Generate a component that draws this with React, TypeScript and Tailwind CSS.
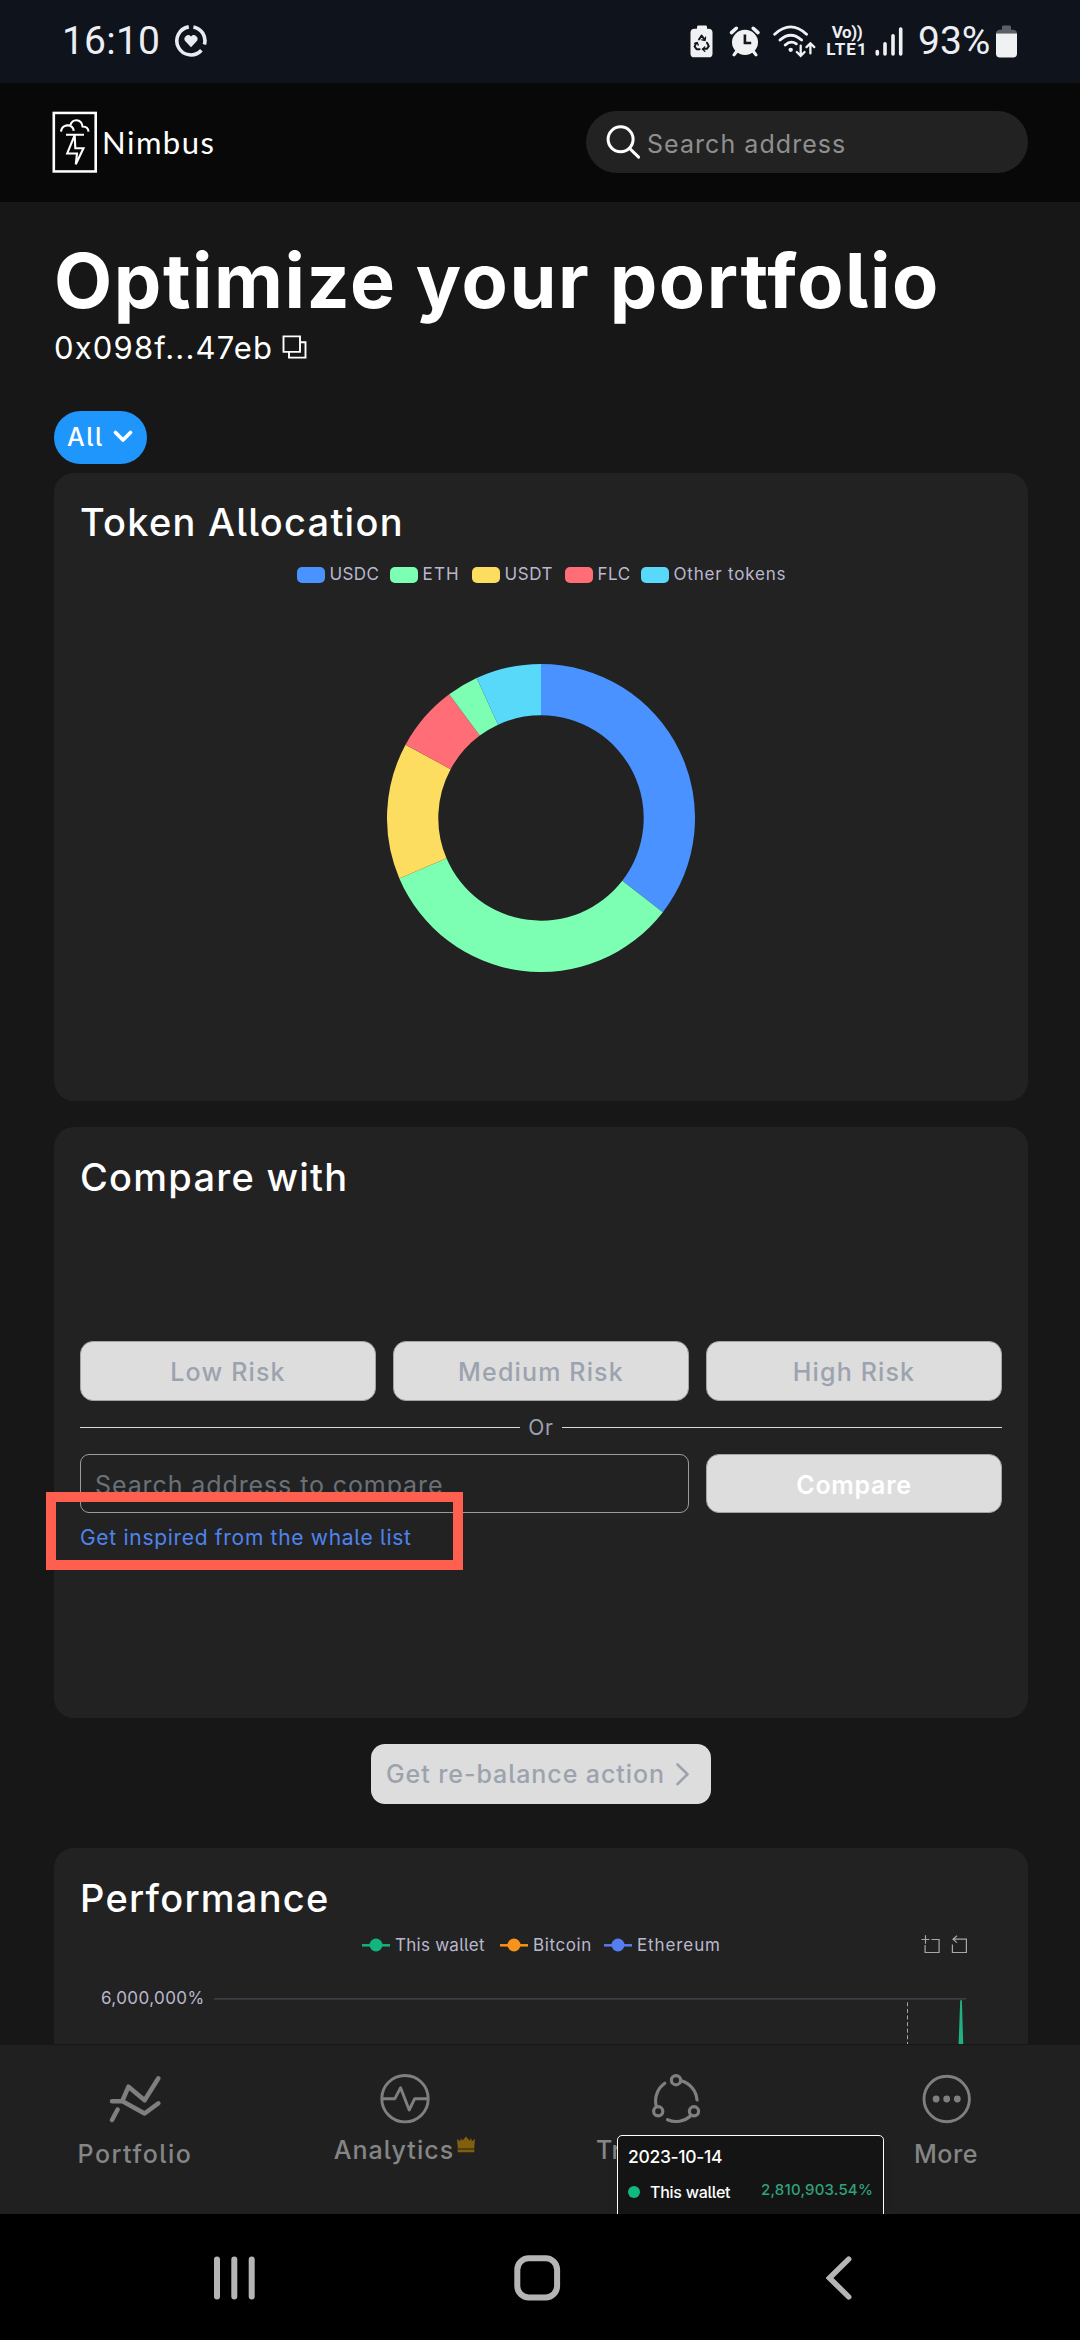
import type { ReactNode } from "react";

const SLICES = [
  { color: "#4992ff", from: 0, to: 127.7 },
  { color: "#7cffb2", from: 127.7, to: 246.9 },
  { color: "#fddd60", from: 246.9, to: 298.4 },
  { color: "#ff6e76", from: 298.4, to: 323.4 },
  { color: "#7cffb2", from: 323.4, to: 335.3 },
  { color: "#58d9f9", from: 335.3, to: 360 },
];

function slicePath(from: number, to: number) {
  const outer = 154;
  const inner = 102.7;
  const at = (deg: number, r: number) => {
    const a = (deg * Math.PI) / 180;
    return `${(154 + r * Math.sin(a)).toFixed(2)} ${(154 - r * Math.cos(a)).toFixed(2)}`;
  };
  return `M${at(from, outer)} A${outer} ${outer} 0 0 1 ${at(to, outer)} L${at(to, inner)} A${inner} ${inner} 0 0 0 ${at(from, inner)} Z`;
}

function StatusBar() {
  return (
    <div className="flex h-[82.5px] shrink-0 items-center bg-[#0f131b] pl-[62px] pr-[62px] font-['Roboto',sans-serif] text-[#eceef4]">
      <span className="text-[39px] leading-[82px] tracking-[0.2px]">16:10</span>
      <svg className="ml-[14px] h-[34px] w-[34px]" viewBox="174.5 26 34 34" fill="none">
        <path d="M193.9 28.9A14.1 14.1 0 0 1 204.9 46.6M201.9 52.3A14.1 14.1 0 1 1 189.3 28.9" stroke="#e9ebf2" strokeWidth="3.6" />
        <path d="M191.5 49.2l-5.4-5.6a3.5 3.5 0 0 1 5.4-5.2a3.5 3.5 0 0 1 5.4 5.2z" fill="#e9ebf2" />
      </svg>
      <svg className="ml-auto h-[38.7px] w-[128px] shrink-0" viewBox="689 23 128 40" preserveAspectRatio="none" fill="none" strokeLinecap="round">
        <rect x="690.5" y="30" width="22" height="29.5" rx="4" fill="#f0f1f3" />
        <rect x="697" y="26.5" width="10" height="6" rx="1.5" fill="#f0f1f3" />
        <path d="M699 41l2.6-4l3 4.4M707 44.4l1.800 3.600l-2 2.800h-3.600M699.600 51.200h-3l-2-3l1.800-3.600" stroke="#12161e" strokeWidth="2" strokeLinejoin="round" />
        <path d="M705.500 38.800l-.6 3.200l-3-.6M704.800 48.800l-2.200 2.400l2.200 2M694.600 45l2.600-.8l1 2.600" stroke="#12161e" strokeWidth="1.400" />
        <circle cx="745" cy="44" r="13" fill="#f0f1f3" />
        <path d="M731.500 34l4.800-4.500M758 34l-4.800-4.500" stroke="#f0f1f3" strokeWidth="3.600" />
        <path d="M737 53l-3 4M753 53l3 4" stroke="#f0f1f3" strokeWidth="3.200" />
        <path d="M744.900 36v8.700h6.300" stroke="#12161e" strokeWidth="2.600" strokeLinecap="butt" />
        <path d="M774.700 35.600Q790.700 20.500 806.500 35.600M780 41.700Q790.700 31.500 801.600 41.700M785.300 46.800Q790.700 41.500 796.300 45.600" stroke="#f0f1f3" strokeWidth="2.900" />
        <circle cx="790.700" cy="51.800" r="2.200" fill="#f0f1f3" />
        <path d="M800.700 47.500v10M796.800 54l3.900 4l3.900-4M810.400 55.500v-10M806.500 49l3.900-4l3.900 4" stroke="#f0f1f3" strokeWidth="2.300" />
      </svg>
      <div className="ml-[10px] flex w-[40px] shrink-0 flex-col items-center font-bold leading-[17.500px]">
        <span className="text-[17px] tracking-[-0.400px]">Vo))</span>
        <span className="text-[17px] tracking-[1.100px]">LTE1</span>
      </div>
      <svg className="ml-[8px] h-[33px] w-[29px] shrink-0" viewBox="875 26 29 34" preserveAspectRatio="none" stroke="#f0f1f3" strokeWidth="3.600" strokeLinecap="round">
        <path d="M877.300 53.400v2.500M885 45.200v10.700M893 37.200v18.700M900.700 30v25.900" />
      </svg>
      <span className="ml-[14px] w-[72px] shrink-0 text-[39px] leading-[82px]">93%</span>
      <svg className="ml-[6px] h-[32.900px] w-[22px] shrink-0" viewBox="996 26 22 34" preserveAspectRatio="none">
        <path d="M1002 31v-3a1.500 1.500 0 0 1 1.500-1.500h6a1.500 1.500 0 0 1 1.500 1.500v3h2.500a4 4 0 0 1 3.500 4h-21a4 4 0 0 1 3.500-4z" fill="#5c5f65" />
        <path d="M996 34.800h21v20.700a4 4 0 0 1-4 4h-13a4 4 0 0 1-4-4z" fill="#f0f1f3" />
      </svg>
    </div>
  );
}

function Header() {
  return (
    <header className="flex h-[119.5px] shrink-0 items-center justify-between bg-[#080808] pl-[52px] pr-[52px]">
      <div className="flex items-center">
        <svg className="h-[62px] w-[46px]" viewBox="52 115 46 64" preserveAspectRatio="none" fill="none" stroke="#fff">
          <rect x="53.800" y="117" width="41.900" height="60.400" strokeWidth="2.600" />
          <g strokeWidth="2.100">
            <path d="M61 136.300C61.500 130.500 66.500 129 70.300 130.300C71.500 122.500 81.500 122.500 82.500 131C86 131 88.300 133 88.500 136.300M67.500 129.600C71 130 73.500 132 73.700 135.500" />
            <path d="M66 139.600h18M74.700 140L67.200 158.800h9.800l-1.200 11.200l7.700-16.600h-8.200z" />
          </g>
        </svg>
        <span className="ml-[4px] font-['Lato',sans-serif] text-[31px] leading-[40px] tracking-[1.500px] text-white">Nimbus</span>
      </div>
      <div className="flex h-[62px] w-[442px] items-center rounded-full bg-[#222] pl-[20px]">
        <svg className="h-[38px] w-[36px]" viewBox="606 123.300 36 38" fill="none" stroke="#fff" strokeWidth="3" strokeLinecap="round">
          <circle cx="620.600" cy="139.600" r="12.500" />
          <path d="M629.800 148.900l8.800 8.500" />
        </svg>
        <span className="ml-[5px] mt-[3px] text-[25px] leading-[32px] tracking-[1.050px] text-[#8f8f8f]">Search address</span>
      </div>
    </header>
  );
}

function CardTitle({ children }: { children: ReactNode }) {
  return <h2 className="text-[38px] font-medium leading-[48px] tracking-[1.250px] text-white">{children}</h2>;
}

function Swatch({ className, children }: { className: string; children: ReactNode }) {
  return (
    <div className="flex items-center gap-[5px]">
      <span className={`mt-px h-[16px] w-[28px] shrink-0 rounded-[5px] ${className}`} />
      <span className="whitespace-nowrap">{children}</span>
    </div>
  );
}

function TokenAllocation() {
  return (
    <section className="mt-[8.700px] h-[628px] rounded-[20px] bg-[#222] px-[26px] pt-[25.500px]">
      <CardTitle>Token Allocation</CardTitle>
      <div className="mt-[18px] grid grid-cols-[93px_82px_93px_76px_146px] justify-center pl-px text-[17px] leading-[20px] text-[#b9b8ce]">
        <Swatch className="bg-[#4992ff]"><span className="tracking-[0.400px]">USDC</span></Swatch>
        <Swatch className="bg-[#7cffb2]"><span className="tracking-[1.200px]">ETH</span></Swatch>
        <Swatch className="bg-[#fddd60]"><span className="tracking-[0.560px]">USDT</span></Swatch>
        <Swatch className="bg-[#ff6e76]"><span className="tracking-[0.500px]">FLC</span></Swatch>
        <Swatch className="bg-[#58d9f9]"><span className="tracking-[0.800px]">Other tokens</span></Swatch>
      </div>
      <svg className="mx-auto mt-[79.800px] h-[308px] w-[308px]" viewBox="0 0 308 308">
        {SLICES.map((s) => (
          <path key={s.from} d={slicePath(s.from, s.to)} fill={s.color} />
        ))}
      </svg>
    </section>
  );
}

function RiskButton({ children }: { children: ReactNode }) {
  return (
    <button className="h-[59.700px] rounded-[13px] border border-[#a3a3a3] bg-[#ddd] pt-[2px] text-[25px] font-medium leading-[32px] tracking-[1.150px] text-[#9ca3af]">
      {children}
    </button>
  );
}

function CompareWith() {
  return (
    <section className="relative mt-[26.600px] h-[590.400px] rounded-[20px] bg-[#222] px-[26px] pt-[25.600px]">
      <CardTitle>Compare with</CardTitle>
      <div className="mt-[140.100px] grid grid-cols-3 gap-[17px]">
        <RiskButton>Low Risk</RiskButton>
        <RiskButton>Medium Risk</RiskButton>
        <RiskButton>High Risk</RiskButton>
      </div>
      <div className="mt-[11.600px] flex h-[30px] items-center gap-[8px]">
        <span className="h-px flex-1 bg-[#d8d8d8]" />
        <span className="pt-px text-[21px] leading-[30px] tracking-[0.900px] text-[#9ca3af]">Or</span>
        <span className="h-px flex-1 bg-[#d8d8d8]" />
      </div>
      <div className="mt-[11.700px] grid grid-cols-3 gap-[17px]">
        <div className="col-span-2 flex h-[59.500px] items-center rounded-[9px] border border-[#9b9b9b] pl-[14px] pt-[2px]">
          <span className="text-[25px] leading-[32px] tracking-[0.900px] text-[#6b7078]">Search address to compare</span>
        </div>
        <button className="h-[59.500px] rounded-[13px] border border-[#a3a3a3] bg-[#ddd] pt-[2px] text-[25px] font-semibold leading-[32px] tracking-[0.700px] text-white">Compare</button>
      </div>
      <a className="mt-[9.500px] block text-[21px] leading-[30px] tracking-[0.700px] text-[#4f83ee]">Get inspired from the whale list</a>
      <div className="absolute left-[-8px] top-[364.700px] h-[78px] w-[417px] border-[10px] border-[#ff5f4e]" />
    </section>
  );
}

function LineKey({ color, className, children }: { color: string; className: string; children: ReactNode }) {
  return (
    <div className="flex items-center gap-[5px]">
      <svg className="mt-px h-[14px] w-[28px] shrink-0" viewBox="0 0 28 14">
        <path d="M0 7.300h28" stroke={color} strokeWidth="2.500" />
        <circle cx="14" cy="7" r="6.500" fill={color} />
      </svg>
      <span className={`whitespace-nowrap ${className}`}>{children}</span>
    </div>
  );
}

function Performance() {
  return (
    <section className="mt-[44px] h-[210px] rounded-t-[20px] bg-[#222] px-[26px] pt-[26.200px]">
      <CardTitle>Performance</CardTitle>
      <div className="relative mt-[12.900px] grid grid-cols-[138px_104px_117px] justify-center pl-px text-[17px] leading-[20px] text-[#b9b8ce]">
        <LineKey color="#13b47e" className="tracking-[0.260px]">This wallet</LineKey>
        <LineKey color="#f7931a" className="tracking-[0.600px]">Bitcoin</LineKey>
        <LineKey color="#547fef" className="tracking-[0.900px]">Ethereum</LineKey>
        <svg className="absolute right-[34px] top-0 h-[20px] w-[48px]" viewBox="920 1934.800 48 20" fill="none" stroke="#a6a6ae" strokeWidth="1.200">
          <path d="M921.500 1939.300h8M925.500 1935v8.500M931.500 1939.300h7.600v13h-14v-7.600" />
          <path d="M957 1935.600l-4 3.400l4 3.400M953 1939h13.400v13.300h-14v-8" />
        </svg>
      </div>
      <div className="mt-[32.900px] flex pl-[21px]">
        <span className="w-[113px] text-[17px] leading-[20px] tracking-[0.400px] text-[#b9b8ce]">6,000,000%</span>
        <svg className="h-[58px] w-[756px]" viewBox="214 1987.700 756 58" fill="none">
          <path d="M214 1998.500h752" stroke="#484753" strokeWidth="1.200" />
          <path d="M907.500 2002v43" stroke="#a6a6a6" strokeWidth="1" strokeDasharray="4 2.600" />
          <path d="M960.200 2000h1.700l1.400 46h-4.800z" fill="#1fb184" />
        </svg>
      </div>
    </section>
  );
}

function NavItem({ icon, top, children }: { icon: ReactNode; top: string; children: ReactNode }) {
  return (
    <div className="flex flex-col items-center text-[25px] font-medium leading-[32px] text-[#858585]">
      {icon}
      <div className={`flex ${top}`}>{children}</div>
    </div>
  );
}

function BottomNav() {
  const icon = "mt-[27px] h-[54px] w-[54px]";
  return (
    <nav className="relative grid h-[170.200px] shrink-0 grid-cols-4 overflow-hidden border-t-[1.500px] border-[#171717] bg-[#202020]">
      <NavItem
        top="mt-[12px]"
        icon={
          <svg className={icon} viewBox="108 2072 54 54" fill="none" stroke="#7f7f7f" strokeWidth="4.500" strokeLinecap="round" strokeLinejoin="round">
            <path d="M112 2120l5.600-10.500M112 2101.300h10.500l22.100 12.200l13.800-10.200M122.500 2100.500l6-13.800l16.100 13.600l13.800-22" />
          </svg>
        }
      >
        <span className="tracking-[1.500px]">Portfolio</span>
      </NavItem>
      <NavItem
        top="mt-[8.600px]"
        icon={
          <svg className={icon} viewBox="378.600 2072 54 54" fill="none" stroke="#7f7f7f" strokeWidth="2.900" strokeLinejoin="round">
            <circle cx="405.600" cy="2098.700" r="23.200" />
            <path d="M382.500 2098.700h13l5.700-11l8.600 22.300l5.500-11.300h13.500" />
          </svg>
        }
      >
        <span className="tracking-[1.050px]">Analytics</span>
        <svg className="ml-[2px] mt-[1px] h-[18px] w-[20px]" viewBox="0 0 20 18" fill="#80600c">
          <path d="M1 4l4.200 3l4.800-5.500l4.800 5.500l4.200-3l-.8 9.500h-16.400zM5 3l2.500 5h-4zM15 3l1.500 5h-4zM1.700 14.500h16.600v2.800h-16.600z" />
        </svg>
      </NavItem>
      <NavItem
        top="mt-[8.600px]"
        icon={
          <svg className={icon} viewBox="648 2072 54 54" fill="none" stroke="#7f7f7f" strokeWidth="3.200" strokeLinecap="round">
            <circle cx="676" cy="2080.200" r="4.600" />
            <circle cx="658.200" cy="2111.300" r="4.600" />
            <circle cx="694" cy="2111.300" r="4.600" />
            <path d="M681.500 2080.900A21.500 21.500 0 0 1 697 2100M664.800 2083.300A21.500 21.500 0 0 0 656.200 2106M690.500 2116A21.500 21.500 0 0 1 667.500 2119.700" />
          </svg>
        }
      >
        <span className="w-[158px] tracking-[0.500px]">Tr</span>
      </NavItem>
      <NavItem
        top="mt-[12px]"
        icon={
          <svg className={icon} viewBox="919.700 2072 54 54" fill="none" stroke="#7f7f7f" strokeWidth="2.900">
            <circle cx="948.400" cy="2099" r="22.700" />
            <g fill="#7f7f7f" stroke="none">
              <circle cx="937.800" cy="2099" r="3.400" />
              <circle cx="948.400" cy="2099" r="3.400" />
              <circle cx="959" cy="2099" r="3.400" />
            </g>
          </svg>
        }
      >
        <span className="pl-[2px] tracking-[0.600px]">More</span>
      </NavItem>
      <div className="absolute left-[617px] top-[90.500px] h-[100px] w-[267px] rounded-[5px] border border-white bg-[#141414] px-[10px] pt-[8.300px] font-medium text-white shadow-lg">
        <div className="text-[17.500px] leading-[26px] tracking-[-0.320px]">2023-10-14</div>
        <div className="mt-[9px] flex items-center">
          <span className="h-[12px] w-[12px] rounded-full bg-[#10b981]" />
          <span className="ml-[10px] text-[16px] leading-[26px] tracking-[-0.260px]">This wallet</span>
          <span className="-mt-[4px] ml-auto text-[15px] leading-[26px] tracking-[0.200px] text-[#2fa27b]">2,810,903.54%</span>
        </div>
      </div>
    </nav>
  );
}

function SystemNav() {
  return (
    <div className="flex h-[126.300px] shrink-0 bg-black pl-[213px] pt-[41.800px]">
      <svg className="h-[48px] w-[42px]" viewBox="213 2255.500 42 48" fill="none" stroke="#b5b5b5" strokeWidth="6" strokeLinecap="round">
        <path d="M217 2260v37M234.300 2260v37M251.700 2260v37" />
      </svg>
      <svg className="ml-[256.500px] h-[48px] w-[50px]" viewBox="511.500 2255.500 50 48" fill="none" stroke="#b5b5b5" strokeWidth="6">
        <rect x="516.800" y="2258.700" width="39.800" height="39.300" rx="11.500" />
      </svg>
      <svg className="ml-[264.500px] h-[48px] w-[42px]" viewBox="826 2255.500 42 48" fill="none" stroke="#b5b5b5" strokeWidth="5.500" strokeLinecap="round">
        <path d="M848.700 2259.600l-19.200 18.900l19.200 18.900" />
      </svg>
    </div>
  );
}

export default function App() {
  return (
    <div className="flex h-[2340px] w-[1080px] flex-col overflow-hidden bg-[#171717] font-['Inter',sans-serif] [font-feature-settings:'cv05']">
      <StatusBar />
      <Header />
      <main className="h-[1841.500px] shrink-0 overflow-hidden pl-[54px] pr-[52px] pt-[33.500px]">
        <h1 className="whitespace-nowrap text-[75.500px] font-bold leading-[90px] tracking-[1.560px] text-white">Optimize your portfolio</h1>
        <div className="mt-[2px] flex h-[40px] items-center">
          <span className="text-[31px] leading-[40px] tracking-[1.170px] text-white">0x098f...47eb</span>
          <svg className="ml-[9px] h-[25px] w-[26px]" viewBox="0 0 26 26" preserveAspectRatio="none" fill="none" stroke="#fff" strokeWidth="1.900">
            <path d="M1.500 1.500h16.500v16h-16.500z M18 7.500h5.500v16h-16.500v-6" />
          </svg>
        </div>
        <button className="mt-[43.200px] flex h-[53.300px] w-[93px] items-center rounded-full bg-[#1e96fc] pl-[13px] text-white">
          <span className="text-[25px] font-medium leading-[32px] tracking-[1.600px]">All</span>
          <svg className="ml-[8px] h-[16px] w-[22px]" viewBox="0 0 22 16" fill="none" stroke="#fff" strokeWidth="3.800" strokeLinecap="round" strokeLinejoin="round">
            <path d="M3.500 3.500l7.500 7.500l7.500-7.500" />
          </svg>
        </button>
        <TokenAllocation />
        <CompareWith />
        <button className="mx-auto mt-[26.600px] flex h-[59.400px] w-[340px] items-center rounded-[14px] bg-[#ddd] pl-[15px] text-[#9ca3af]">
          <span className="whitespace-nowrap text-[25px] font-medium leading-[32px] tracking-[0.920px]">Get re-balance action</span>
          <svg className="ml-[10px] h-[26px] w-[16px]" viewBox="0 0 16 26" fill="none" stroke="#9ca3af" strokeWidth="2.600" strokeLinecap="round" strokeLinejoin="round">
            <path d="M2.500 3.500l10 9.800l-10 9.800" />
          </svg>
        </button>
        <Performance />
      </main>
      <BottomNav />
      <SystemNav />
    </div>
  );
}
